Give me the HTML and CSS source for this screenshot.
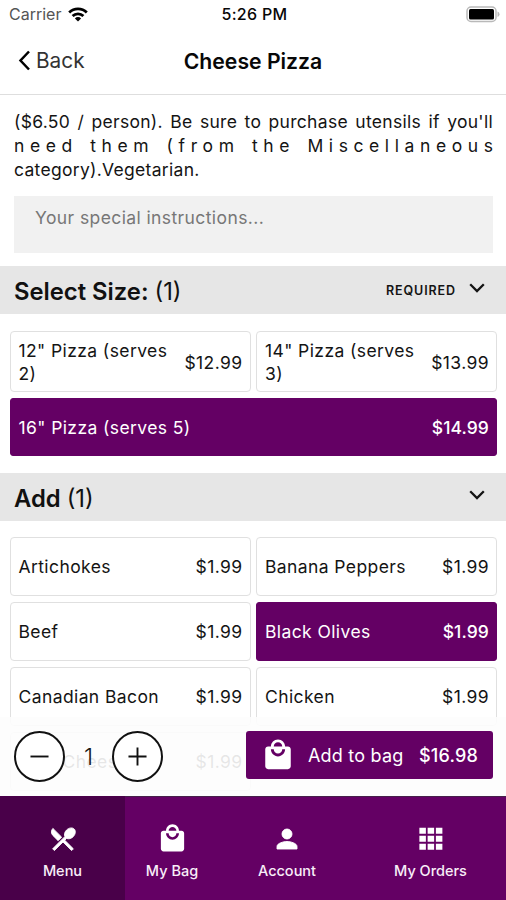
FILE: index.html
```html
<!DOCTYPE html>
<html lang="en">
<head>
<meta charset="utf-8">
<meta name="viewport" content="width=device-width, initial-scale=1">
<title>Cheese Pizza</title>
<link rel="stylesheet" href="styles.css">
</head>
<body>
<svg class="sprite" aria-hidden="true">
  <symbol id="bag" viewBox="0 0 24 24"><path d="M19 6h-2c0-2.760-2.240-5-5-5S7 3.240 7 6H5c-1.100 0-2 .9-2 2v12c0 1.100.9 2 2 2h14c1.100 0 2-.9 2-2V8c0-1.100-.9-2-2-2zm-7-3c1.660 0 3 1.340 3 3H9c0-1.660 1.340-3 3-3zm0 10c-2.760 0-5-2.240-5-5h2c0 1.660 1.340 3 3 3s3-1.340 3-3h2c0 2.760-2.240 5-5 5z"/></symbol>
  <symbol id="chevron" viewBox="0 0 16 10"><path d="M1.200 1.200 8 8l6.800-6.800" fill="none" stroke="currentColor" stroke-width="2.300"/></symbol>
</svg>
<div class="screen">
  <div class="status">
    <div class="carrier"><span>Carrier</span>
      <svg class="wifi" viewBox="0 0 20 15"><g fill="none" stroke="#000" stroke-width="2.800"><path d="M1.200 5.400a12.600 12.600 0 0 1 17.600 0"/><path d="M4.600 9a7.700 7.700 0 0 1 10.800 0"/></g><path d="M10 14.500 6.900 11.400a4.400 4.400 0 0 1 6.200 0z"/></svg>
    </div>
    <div class="time">5:26 PM</div>
    <svg class="battery" viewBox="0 0 34 17"><rect x="1" y="1" width="29" height="14.500" rx="4" fill="#fff" stroke="#b9b9b9" stroke-width="1.500"/><rect x="3" y="3" width="25" height="10.500" rx="1.500"/><path d="M31.500 5.500q2 .5 2 2.700t-2 2.700z" fill="#b9b9b9"/></svg>
  </div>
  <header class="titlebar">
    <div class="back"><svg viewBox="0 0 12 21"><path d="M10.500 1.500 2 10.500l8.500 9" fill="none" stroke="#000" stroke-width="2.500"/></svg><span>Back</span></div>
    <h1>Cheese Pizza</h1>
  </header>
  <main>
    <p class="description"><span class="line">($6.50 / person). Be sure to purchase utensils if you'll</span> <span class="line spread">need them (from the Miscellaneous</span> <span class="line last">category).Vegetarian.</span></p>
    <div class="instructions">Your special instructions...</div>
    <section>
      <div class="bar"><h2>Select Size: <span>(1)</span></h2><em>REQUIRED</em><svg class="chev"><use href="#chevron"/></svg></div>
      <div class="options sizes">
        <div class="option tall"><span>12" Pizza (serves 2)</span><b>$12.99</b></div>
        <div class="option tall"><span>14" Pizza (serves 3)</span><b>$13.99</b></div>
        <div class="option wide selected"><span>16" Pizza (serves 5)</span><b>$14.99</b></div>
      </div>
    </section>
    <section>
      <div class="bar"><h2>Add <span>(1)</span></h2><svg class="chev"><use href="#chevron"/></svg></div>
      <div class="options">
        <div class="option"><span>Artichokes</span><b>$1.99</b></div>
        <div class="option"><span>Banana Peppers</span><b>$1.99</b></div>
        <div class="option"><span>Beef</span><b>$1.99</b></div>
        <div class="option selected"><span>Black Olives</span><b>$1.99</b></div>
        <div class="option"><span>Canadian Bacon</span><b>$1.99</b></div>
        <div class="option"><span>Chicken</span><b>$1.99</b></div>
        <div class="option indent"><span>Cheese</span><b>$1.99</b></div>
      </div>
    </section>
    <div class="purchase">
      <div class="stepper">
        <div class="round"><svg viewBox="0 0 20 20"><path d="M.5 10h19"/></svg></div>
        <span>1</span>
        <div class="round"><svg viewBox="0 0 20 20"><path d="M.5 10h19M10 .5v19"/></svg></div>
      </div>
      <div class="add"><svg><use href="#bag"/></svg><span>Add to bag</span><b>$16.98</b></div>
    </div>
  </main>
  <nav>
    <div class="tab active"><svg viewBox="0 0 24 24"><path d="M8.100 13.340l2.830-2.830L3.910 3.500c-1.560 1.560-1.560 4.090 0 5.660l4.190 4.180zm6.780-1.810c1.530.710 3.680.210 5.270-1.380 1.910-1.910 2.280-4.650.810-6.120-1.460-1.460-4.200-1.100-6.120.810-1.590 1.590-2.090 3.740-1.380 5.270L3.700 19.870l1.410 1.410L12 14.410l6.880 6.880 1.410-1.410L13.410 13l1.470-1.470z" stroke="#fff" stroke-width=".7"/></svg><span>Menu</span></div>
    <div class="tab"><svg class="lift"><use href="#bag"/></svg><span>My Bag</span></div>
    <div class="tab"><svg viewBox="0 0 24 24"><path d="M12 12c2.210 0 4-1.790 4-4s-1.790-4-4-4-4 1.790-4 4 1.790 4 4 4zm0 2c-2.670 0-8 1.340-8 4v2h16v-2c0-2.660-5.330-4-8-4z" stroke="#fff" stroke-width=".7"/></svg><span>Account</span></div>
    <div class="tab"><svg viewBox="0 0 24 24"><path d="M2.700 7.800h5.200V2.900H2.700zm6.600 0h5.200V2.900H9.300zm6.600 0h5.200V2.900h-5.200zM2.700 14.200h5.200V9.300H2.700zm6.600 0h5.200V9.300H9.300zm6.600 0h5.200V9.300h-5.200zM2.700 20.600h5.200v-4.900H2.700zm6.600 0h5.200v-4.900H9.300zm6.600 0h5.200v-4.900h-5.200z"/></svg><span>My Orders</span></div>
  </nav>
</div>
</body>
</html>
```
FILE: styles.css
```css
* { box-sizing: border-box; }
body { margin: 0; background: #fff; color: #141414; font-family: Inter, "Liberation Sans", sans-serif; }
.sprite { position: absolute; width: 0; height: 0; }
.screen { width: 506px; height: 900px; display: flex; flex-direction: column; overflow: hidden; }
.status { height: 29px; flex: none; display: grid; grid-template-columns: 1fr auto 1fr; align-items: center; padding: 0 6px 1px 9px; font-size: 16px; }
.carrier { display: flex; align-items: center; gap: 7px; color: #555; }
.wifi { width: 20px; height: 15px; }
.time { font-weight: 500; letter-spacing: .3px; color: #080808; }
.battery { width: 34px; height: 17px; justify-self: end; }
.titlebar { height: 66px; flex: none; border-bottom: 1px solid #dedede; display: grid; grid-template-columns: 1fr auto 1fr; align-items: center; padding: 0 18px 2px; }
.back { display: flex; align-items: center; gap: 5px; font-size: 20.800px; color: #333; }
.back svg { width: 13px; height: 21px; }
h1 { margin: 0; font-size: 21.200px; font-weight: 600; line-height: 28px; color: #080808; }
main { flex: 1; min-height: 0; overflow: hidden; position: relative; }
.description { margin: 15px 13px 0 14px; font-size: 17.500px; line-height: 24px; height: 86px; letter-spacing: .3px; }
.line { display: block; white-space: nowrap; text-align: justify; text-align-last: justify; }
.line.spread { letter-spacing: 5.600px; margin-right: -5.600px; }
.line.last { text-align-last: left; }
.instructions { margin: 0 13px 13px 14px; height: 57px; padding: 10px 21px; background: #f1f1f1; color: #777; font-size: 17.500px; line-height: 24px; letter-spacing: .4px; }
.bar { height: 48px; background: #e6e6e6; padding: 0 21px 0 14px; display: flex; align-items: center; }
h2 { margin: 2px auto 0 0; font-size: 23.800px; font-weight: 600; color: #111; }
h2 span { font-weight: 400; }
.bar em { font-style: normal; font-size: 12.500px; font-weight: 600; letter-spacing: .9px; margin-right: 13px; margin-top: 1px; }
.chev { width: 16px; height: 10px; margin-top: -4px; }
.options { display: grid; grid-template-columns: 241px 241px; column-gap: 5.500px; row-gap: 6px; padding: 16px 9px 0 9.500px; }
.sizes { padding-top: 17px; padding-bottom: 17px; }
.option { height: 59px; border: 1.500px solid #e0e0e0; border-radius: 4px; padding: 0 7px 0 8px; display: flex; align-items: center; justify-content: space-between; font-size: 17.500px; line-height: 23px; letter-spacing: .4px; }
.option b, .add b { font-weight: 400; }
.option.tall { height: 61px; }
.option.tall span { width: 158px; padding-top: 1px; }
.option.tall b { padding-top: 1px; }
.option.wide { grid-column: 1 / 3; height: 58px; }
.option.selected { background: #640064; border-color: #640064; color: #fff; border-radius: 3px; }
.option.selected b { font-weight: 500; letter-spacing: .1px; }
.option.indent span { padding-left: 44px; }
.purchase { position: absolute; left: 0; right: 0; bottom: 0; height: 79px; padding: 0 13px 0 14px; background: rgba(253, 253, 253, .9); display: flex; justify-content: space-between; align-items: center; }
.stepper { display: flex; align-items: center; width: 149px; justify-content: space-between; font-size: 23px; font-weight: 300; }
.round { width: 51px; height: 51px; border: 2px solid #111; border-radius: 50%; background: #fff; display: flex; align-items: center; justify-content: center; }
.round svg { width: 19px; height: 19px; fill: none; stroke: #111; stroke-width: 2; }
.add { width: 247px; height: 48px; background: #640064; border-radius: 3px; color: #fff; display: flex; align-items: center; padding: 0 15px; font-size: 18px; margin-top: -3px; letter-spacing: .2px; }
.add svg { width: 34px; height: 34px; fill: #fff; margin-right: 13px; }
.add b { margin-left: auto; font-weight: 500; }
nav { height: 104px; flex: none; background: #640064; color: #fff; display: grid; grid-template-columns: 125px 94px 136px 151px; box-shadow: inset 0 1px #45204a; }
.tab { display: flex; flex-direction: column; align-items: center; padding-top: 28px; font-size: 14.500px; font-weight: 500; line-height: 20px; white-space: nowrap; color: #f8eef8; }
.tab.active { background: #490049; }
.tab svg { width: 30px; height: 30px; fill: #fff; margin-bottom: 7px; }
.tab .lift { width: 31px; height: 31px; margin-top: -1px; }
```
